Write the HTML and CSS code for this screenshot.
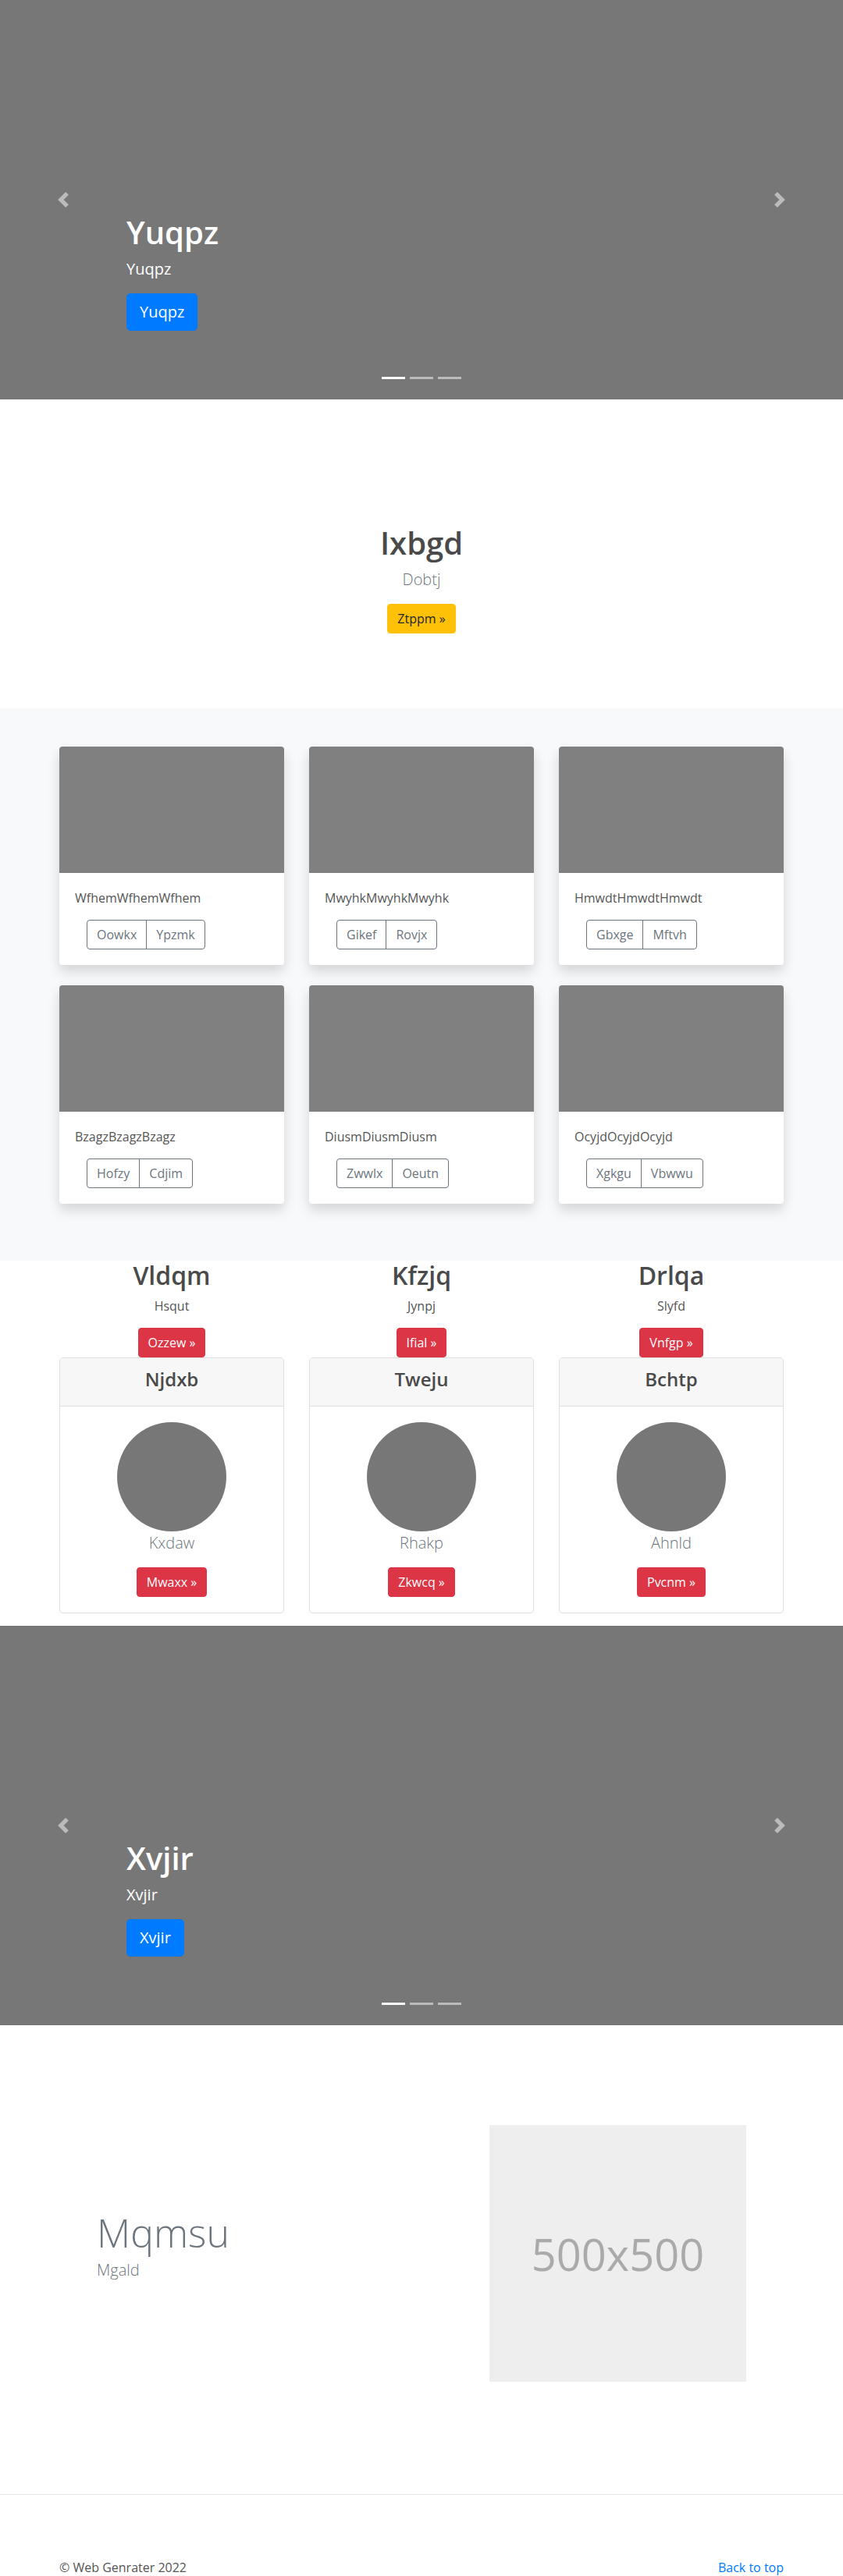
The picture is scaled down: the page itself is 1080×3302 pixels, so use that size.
FILE: index.html
```html
<!DOCTYPE html>
<html lang="en">
<head>
<meta charset="utf-8">
<title>Web Genrater</title>
<link rel="stylesheet" href="styles.css">
</head>
<body>

<section class="carousel">
  <a class="ctrl ctrl-prev" href="#"><svg viewBox="0 0 8 8" width="20" height="20"><path fill="#fff" d="M5.25 0l-4 4 4 4 1.5-1.5L4.25 4l2.5-2.5L5.25 0z"/></svg></a>
  <a class="ctrl ctrl-next" href="#"><svg viewBox="0 0 8 8" width="20" height="20"><path fill="#fff" d="M2.75 0l-1.5 1.5L3.75 4l-2.5 2.5L2.75 8l4-4-4-4z"/></svg></a>
  <div class="caption">
    <h1 class="caption-title">Yuqpz</h1>
    <p class="caption-text">Yuqpz</p>
    <a class="btn btn-lg btn-primary" href="#">Yuqpz</a>
  </div>
  <ol class="indicators"><li class="active"></li><li></li><li></li></ol>
</section>

<section class="intro">
  <h1 class="intro-title">Ixbgd</h1>
  <p class="lead">Dobtj</p>
  <a class="btn btn-warning" href="#">Ztppm »</a>
</section>

<section class="album">
  <div class="container grid3">
    <div class="card">
      <div class="card-img"></div>
      <div class="card-body">
        <p class="card-text">WfhemWfhemWfhem</p>
        <div class="btn-group"><a class="btn btn-outline" href="#">Oowkx</a><a class="btn btn-outline" href="#">Ypzmk</a></div>
      </div>
    </div>
    <div class="card">
      <div class="card-img"></div>
      <div class="card-body">
        <p class="card-text">MwyhkMwyhkMwyhk</p>
        <div class="btn-group"><a class="btn btn-outline" href="#">Gikef</a><a class="btn btn-outline" href="#">Rovjx</a></div>
      </div>
    </div>
    <div class="card">
      <div class="card-img"></div>
      <div class="card-body">
        <p class="card-text">HmwdtHmwdtHmwdt</p>
        <div class="btn-group"><a class="btn btn-outline" href="#">Gbxge</a><a class="btn btn-outline" href="#">Mftvh</a></div>
      </div>
    </div>
    <div class="card">
      <div class="card-img"></div>
      <div class="card-body">
        <p class="card-text">BzagzBzagzBzagz</p>
        <div class="btn-group"><a class="btn btn-outline" href="#">Hofzy</a><a class="btn btn-outline" href="#">Cdjim</a></div>
      </div>
    </div>
    <div class="card">
      <div class="card-img"></div>
      <div class="card-body">
        <p class="card-text">DiusmDiusmDiusm</p>
        <div class="btn-group"><a class="btn btn-outline" href="#">Zwwlx</a><a class="btn btn-outline" href="#">Oeutn</a></div>
      </div>
    </div>
    <div class="card">
      <div class="card-img"></div>
      <div class="card-body">
        <p class="card-text">OcyjdOcyjdOcyjd</p>
        <div class="btn-group"><a class="btn btn-outline" href="#">Xgkgu</a><a class="btn btn-outline" href="#">Vbwwu</a></div>
      </div>
    </div>
  </div>
</section>

<section class="team">
  <div class="container grid3">
    <div class="team-col">
      <h2 class="team-title">Vldqm</h2>
      <p class="team-text">Hsqut</p>
      <a class="btn btn-danger" href="#">Ozzew »</a>
      <div class="pcard">
        <div class="pcard-header"><h4 class="pcard-title">Njdxb</h4></div>
        <div class="pcard-body">
          <div class="avatar"></div>
          <p class="lead pcard-lead">Kxdaw</p>
          <a class="btn btn-danger" href="#">Mwaxx »</a>
        </div>
      </div>
    </div>
    <div class="team-col">
      <h2 class="team-title">Kfzjq</h2>
      <p class="team-text">Jynpj</p>
      <a class="btn btn-danger" href="#">Ifial »</a>
      <div class="pcard">
        <div class="pcard-header"><h4 class="pcard-title">Tweju</h4></div>
        <div class="pcard-body">
          <div class="avatar"></div>
          <p class="lead pcard-lead">Rhakp</p>
          <a class="btn btn-danger" href="#">Zkwcq »</a>
        </div>
      </div>
    </div>
    <div class="team-col">
      <h2 class="team-title">Drlqa</h2>
      <p class="team-text">Slyfd</p>
      <a class="btn btn-danger" href="#">Vnfgp »</a>
      <div class="pcard">
        <div class="pcard-header"><h4 class="pcard-title">Bchtp</h4></div>
        <div class="pcard-body">
          <div class="avatar"></div>
          <p class="lead pcard-lead">Ahnld</p>
          <a class="btn btn-danger" href="#">Pvcnm »</a>
        </div>
      </div>
    </div>
  </div>
</section>

<section class="carousel">
  <a class="ctrl ctrl-prev" href="#"><svg viewBox="0 0 8 8" width="20" height="20"><path fill="#fff" d="M5.25 0l-4 4 4 4 1.5-1.5L4.25 4l2.5-2.5L5.25 0z"/></svg></a>
  <a class="ctrl ctrl-next" href="#"><svg viewBox="0 0 8 8" width="20" height="20"><path fill="#fff" d="M2.75 0l-1.5 1.5L3.75 4l-2.5 2.5L2.75 8l4-4-4-4z"/></svg></a>
  <div class="caption">
    <h1 class="caption-title">Xvjir</h1>
    <p class="caption-text">Xvjir</p>
    <a class="btn btn-lg btn-primary" href="#">Xvjir</a>
  </div>
  <ol class="indicators"><li class="active"></li><li></li><li></li></ol>
</section>

<section class="featurette">
  <div class="container featurette-row">
    <div class="featurette-text">
      <h2 class="featurette-heading">Mqmsu</h2>
      <p class="lead">Mgald</p>
    </div>
    <div class="placeholder"><span>500x500</span></div>
  </div>
</section>

<footer class="footer">
  <div class="container footer-row">
    <p class="copy">© Web Genrater 2022</p>
    <a class="top-link" href="#">Back to top</a>
  </div>
</footer>

</body>
</html>
```

FILE: styles.css
```css
* { box-sizing: border-box; }

body {
  margin: 0;
  font-family: "Open Sans", "Noto Sans", sans-serif;
  font-size: 16px;
  line-height: 1.5;
  color: #555;
  background: #fff;
}

h1, h2, h4, p { margin: 0; }

a { text-decoration: none; }

.container {
  width: 928px;
  margin: 0 auto;
}

.grid3 {
  display: grid;
  grid-template-columns: repeat(3, 288px);
  column-gap: 32px;
}

/* Buttons */
.btn {
  display: inline-block;
  font-size: 16px;
  line-height: 24px;
  padding: 6px 12px;
  border: 1px solid transparent;
  border-radius: 4px;
  text-align: center;
}
.btn-lg {
  font-size: 20px;
  line-height: 30px;
  padding: 8px 16px;
  border-radius: 5px;
}
.btn-primary { background: #007bff; border-color: #007bff; color: #fff; }
.btn-warning { background: #ffc107; border-color: #ffc107; color: #212529; }
.btn-danger { background: #dc3545; border-color: #dc3545; color: #fff; }
.btn-outline { background: transparent; border-color: #6c757d; color: #6c757d; }

.lead {
  font-size: 20px;
  line-height: 30px;
  font-weight: 300;
  color: #6c757d;
}

/* Carousel */
.carousel {
  position: relative;
  height: 512px;
  background: #777;
}

.ctrl {
  position: absolute;
  top: 0;
  bottom: 0;
  width: 15%;
  display: flex;
  align-items: center;
  justify-content: center;
  opacity: 0.5;
}
.ctrl svg { display: block; }
.ctrl-prev { left: 0; }
.ctrl-next { right: 0; }

.caption {
  position: absolute;
  left: 15%;
  right: 15%;
  bottom: 88px;
  color: #fff;
}
.caption-title {
  font-size: 40px;
  line-height: 48px;
  font-weight: 600;
  margin-bottom: 8px;
}
.caption-text {
  font-size: 20px;
  line-height: 30px;
  margin-bottom: 16px;
}

.indicators {
  position: absolute;
  left: 0;
  right: 0;
  bottom: 26px;
  margin: 0;
  padding: 0;
  list-style: none;
  display: flex;
  justify-content: center;
}
.indicators li {
  width: 30px;
  height: 3px;
  margin: 0 3px;
  background: rgba(255, 255, 255, 0.5);
}
.indicators li.active { background: #fff; }

/* Intro */
.intro {
  padding: 160px 0 96px;
  text-align: center;
}
.intro-title {
  font-size: 40px;
  line-height: 48px;
  font-weight: 600;
  color: #4a4a4a;
  margin-bottom: 8px;
}
.intro .lead { margin-bottom: 16px; }

/* Album */
.album {
  background: #f8f9fa;
  padding: 49px 0 47px;
}
.card {
  background: #fff;
  border-radius: 4px;
  overflow: hidden;
  margin-bottom: 26px;
  box-shadow: 0 8px 16px rgba(0, 0, 0, 0.15);
}
.card-img {
  height: 162px;
  background: #808080;
}
.card-body { padding: 20px; }
.card-text {
  margin-bottom: 16px;
  color: #555;
}
.btn-group {
  display: inline-flex;
  margin-left: 15px;
}
.btn-group .btn:first-child {
  border-top-right-radius: 0;
  border-bottom-right-radius: 0;
}
.btn-group .btn + .btn {
  margin-left: -1px;
  border-top-left-radius: 0;
  border-bottom-left-radius: 0;
}

/* Team */
.team-col { text-align: center; }
.team-title {
  font-size: 32px;
  line-height: 38px;
  font-weight: 600;
  color: #4a4a4a;
  margin-bottom: 8px;
}
.team-text { margin-bottom: 16px; color: #555; }
.pcard {
  border: 1px solid #dfdfdf;
  border-radius: 4px;
  margin-bottom: 16px;
  text-align: center;
}
.pcard-header {
  background: #f7f7f7;
  padding: 12px 20px;
  border-bottom: 1px solid #dfdfdf;
}
.pcard-title {
  font-size: 24px;
  line-height: 29px;
  font-weight: 600;
  color: #4a4a4a;
  margin-bottom: 8px;
}
.pcard-body { padding: 20px; }
.avatar {
  width: 140px;
  height: 140px;
  border-radius: 50%;
  background: #777;
  margin: 0 auto;
}
.pcard-lead { margin-bottom: 16px; }

/* Featurette */
.featurette { padding: 128px 0 144px; }
.featurette-row {
  display: flex;
  align-items: center;
  justify-content: space-between;
  padding: 0 48px;
}
.featurette-heading {
  font-size: 50px;
  line-height: 50px;
  font-weight: 300;
  color: #6c757d;
  margin-bottom: 8px;
}
.featurette-text .lead { margin-bottom: 16px; }
.placeholder {
  width: 329px;
  height: 329px;
  background: #eee;
  display: flex;
  align-items: center;
  justify-content: center;
}
.placeholder span {
  font-size: 56px;
  color: #aaa;
  line-height: 1;
}

/* Footer */
.footer {
  border-top: 1px solid #e5e5e5;
  padding: 81px 0 48px;
}
.footer-row {
  display: flex;
  justify-content: space-between;
}
.copy { color: #555; }
.top-link { color: #007bff; }
```
